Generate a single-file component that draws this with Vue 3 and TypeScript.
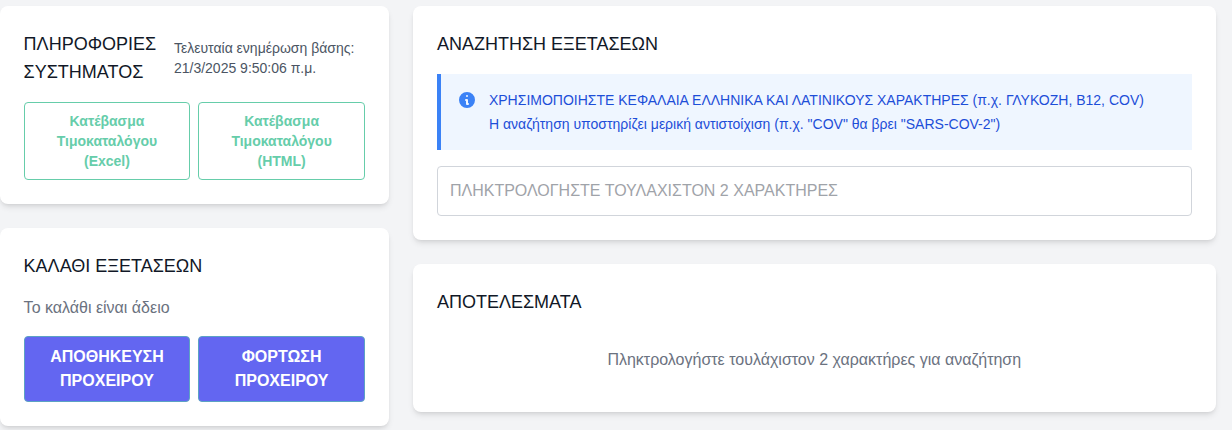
<script setup lang="ts">
import { ref } from 'vue'

const query = ref<string>('')
const lastUpdate = '21/3/2025 9:50:06 π.μ.'
const downloads: string[] = ['(Excel)', '(HTML)']
const draftActions: string[] = ['ΑΠΟΘΗΚΕΥΣΗ ΠΡΟΧΕΙΡΟΥ', 'ΦΟΡΤΩΣΗ ΠΡΟΧΕΙΡΟΥ']
</script>

<template>
  <main class="page">
    <aside class="column">
      <section class="card">
        <header class="system-head">
          <h2 class="title system-title">ΠΛΗΡΟΦΟΡΙΕΣ ΣΥΣΤΗΜΑΤΟΣ</h2>
          <p class="updated">Τελευταία ενημέρωση βάσης: {{ lastUpdate }}</p>
        </header>
        <div class="buttons">
          <button v-for="format in downloads" :key="format" class="btn outline" type="button">
            Κατέβασμα Τιμοκαταλόγου {{ format }}
          </button>
        </div>
      </section>
      <section class="card">
        <h2 class="title">ΚΑΛΑΘΙ ΕΞΕΤΑΣΕΩΝ</h2>
        <p class="muted basket">Το καλάθι είναι άδειο</p>
        <div class="buttons">
          <button v-for="action in draftActions" :key="action" class="btn solid" type="button">
            {{ action }}
          </button>
        </div>
      </section>
    </aside>
    <div class="column">
      <section class="card">
        <h2 class="title">ΑΝΑΖΗΤΗΣΗ ΕΞΕΤΑΣΕΩΝ</h2>
        <div class="notice">
          <svg class="icon" viewBox="0 0 20 20" fill="currentColor" aria-hidden="true">
            <path
              fill-rule="evenodd"
              clip-rule="evenodd"
              d="M18 10a8 8 0 11-16 0 8 8 0 0116 0zm-7-4a1 1 0 11-2 0 1 1 0 012 0zM9 9a1 1 0 000 2v3a1 1 0 001 1h1a1 1 0 100-2v-3a1 1 0 00-1-1H9z"
            />
          </svg>
          <div class="notice-text">
            <p>ΧΡΗΣΙΜΟΠΟΙΗΣΤΕ ΚΕΦΑΛΑΙΑ ΕΛΛΗΝΙΚΑ ΚΑΙ ΛΑΤΙΝΙΚΟΥΣ ΧΑΡΑΚΤΗΡΕΣ (π.χ. ΓΛΥΚΟΖΗ, B12, COV)</p>
            <p>Η αναζήτηση υποστηρίζει μερική αντιστοίχιση (π.χ. "COV" θα βρει "SARS-COV-2")</p>
          </div>
        </div>
        <input v-model="query" class="search" type="text" placeholder="ΠΛΗΚΤΡΟΛΟΓΗΣΤΕ ΤΟΥΛΑΧΙΣΤΟΝ 2 ΧΑΡΑΚΤΗΡΕΣ" />
      </section>
      <section class="card">
        <h2 class="title">ΑΠΟΤΕΛΕΣΜΑΤΑ</h2>
        <p class="muted empty">Πληκτρολογήστε τουλάχιστον 2 χαρακτήρες για αναζήτηση</p>
      </section>
    </div>
  </main>
</template>

<style>
body {
  background: #f3f4f6;
  overflow: hidden;
}
</style>

<style scoped>
.page {
  box-sizing: border-box;
  width: 1216px;
  height: 430px;
  margin-left: -0.4px;
  padding-top: 6px;
  display: grid;
  grid-template-columns: 389.33px 1fr;
  gap: 24px;
  font-family: "Liberation Sans", Arial, sans-serif;
  font-size: 16px;
  line-height: 24px;
}
.column {
  display: flex;
  flex-direction: column;
  gap: 24px;
}
.card {
  padding: 24px;
  border-radius: 8px;
  background: #fff;
  box-shadow: 0 4px 6px -1px rgba(0, 0, 0, 0.1), 0 2px 4px -2px rgba(0, 0, 0, 0.1);
}
p {
  margin: 0;
}
.title {
  margin: 0 0 16px;
  font-size: 18px;
  line-height: 28px;
  font-weight: 400;
  color: #111827;
}
.system-head {
  display: flex;
  align-items: center;
  justify-content: space-between;
  margin-bottom: 16px;
}
.system-title {
  width: 140px;
  margin: 0;
}
.updated {
  width: 191px;
  font-size: 14px;
  line-height: 20px;
  color: #4b5563;
}
.buttons {
  display: grid;
  grid-template-columns: 1fr 1fr;
  gap: 8px;
}
.btn {
  padding: 8px 16px;
  border: 1px solid #66cdaa;
  border-radius: 4px;
  font-family: inherit;
  font-weight: 700;
  text-align: center;
}
.outline {
  background: #fff;
  color: #66cdaa;
  font-size: 14px;
  line-height: 20px;
}
.solid {
  border-color: #5ca2c4;
  background: #6366f1;
  color: #fff;
  font-size: 16px;
  line-height: 24px;
}
.muted {
  color: #6b7280;
}
.basket {
  margin-bottom: 16px;
}
.notice {
  display: flex;
  gap: 12px;
  padding: 16px;
  margin-bottom: 16px;
  border-left: 4px solid #3b82f6;
  background: #eff6ff;
}
.icon {
  width: 20px;
  height: 20px;
  flex: none;
  color: #3b82f6;
}
.notice-text {
  display: grid;
  gap: 4px;
  font-size: 14px;
  line-height: 20px;
  color: #1d4ed8;
}
.search {
  display: block;
  box-sizing: border-box;
  width: 100%;
  height: 50px;
  padding: 12px;
  border: 1px solid #d1d5db;
  border-radius: 4px;
  background: #fff;
  font: inherit;
  color: #111827;
  outline: none;
}
.search::placeholder {
  color: #9fa3a9;
  opacity: 1;
}
.empty {
  padding: 16px 0;
  text-align: center;
}
</style>
